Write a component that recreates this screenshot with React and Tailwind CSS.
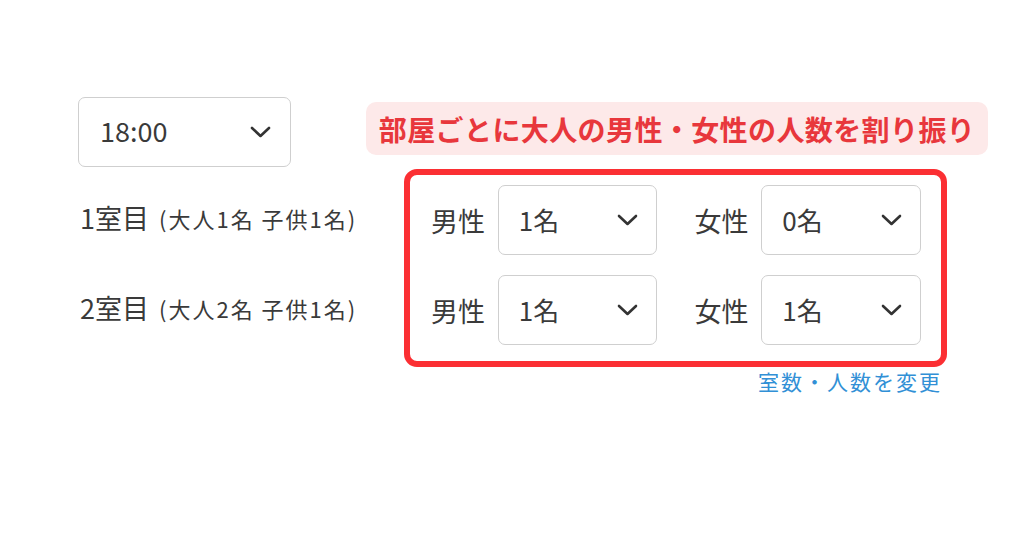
const font = { fontFamily: '"Noto Sans CJK JP", "Noto Sans", sans-serif' };

function Chevron() {
    return (
        <svg width="21" height="12" viewBox="0 0 21 12" fill="none" className="shrink-0">
            <polyline points="2,2 10.5,10 19,2" stroke="#333" strokeWidth="2.6" strokeLinecap="round" strokeLinejoin="round" />
        </svg>
    );
}

function Select({ value, className, textClass = '' }) {
    return (
        <div className={`flex items-center justify-between h-[70px] border border-[#cfcfcf] rounded-[7px] bg-white pl-[20px] pr-[18px] ${className}`}>
            <span className={`text-[26px] text-[#3a3a3a] leading-none ${textClass}`}>{value}</span>
            <Chevron />
        </div>
    );
}

function PairRow({ male, female }) {
    return (
        <div className="flex items-center">
            <span className="w-[56px] text-[27px] text-[#3a3a3a] leading-none whitespace-nowrap">男性</span>
            <Select value={male} className="ml-[11px] w-[159px]" />
            <span className="ml-[38px] w-[56px] text-[27px] text-[#3a3a3a] leading-none whitespace-nowrap">女性</span>
            <Select value={female} className="ml-[11px] w-[160px]" />
        </div>
    );
}

export default function App() {
    const rooms = [
        { name: '1室目', detail: '(大人1名 子供1名)', male: '1名', female: '0名' },
        { name: '2室目', detail: '(大人2名 子供1名)', male: '1名', female: '1名' },
    ];

    return (
        <div className="w-[1024px] h-[538px] bg-white pt-[97px] pl-[78px]" style={font}>
            {/* time + note */}
            <div className="flex items-start">
                <Select value="18:00" className="w-[213px] pl-[21px] pr-[19px]" textClass="text-[27px] -mt-[4px]" />
                <div className="ml-[75px] mt-[5px] w-[622px] h-[53px] rounded-[10px] bg-[#fde9e9] flex items-center justify-center">
                    <span className="text-[28px] font-bold text-[#e8373c] leading-none tracking-[0.4px] whitespace-nowrap">
                        部屋ごとに大人の男性・女性の人数を割り振り
                    </span>
                </div>
            </div>

            <div className="flex mt-[2px]">
                {/* room labels */}
                <div className="w-[326px] pt-[14px] flex flex-col gap-[20px]">
                    {rooms.map((r) => (
                        <div key={r.name} className="h-[70px] flex items-center text-[#3a3a3a] whitespace-nowrap pl-[2px]">
                            <span className="text-[27px]">{r.name}</span>
                            <span className="ml-[10px] text-[22px] tracking-[2px]">{r.detail}</span>
                        </div>
                    ))}
                </div>

                {/* allocation */}
                <div className="w-[543px]">
                    <div className="h-[198px] border-[6px] border-[#fb2f33] rounded-[13px] pt-[10px] pl-[21px] pr-[20px] flex flex-col gap-[20px]">
                        {rooms.map((r) => (
                            <PairRow key={r.name} male={r.male} female={r.female} />
                        ))}
                    </div>
                    <div className="-mt-[1px] pr-[5px] text-right text-[21px] text-[#3190d6] tracking-[2px]">
                        室数・人数を変更
                    </div>
                </div>
            </div>
        </div>
    );
}
